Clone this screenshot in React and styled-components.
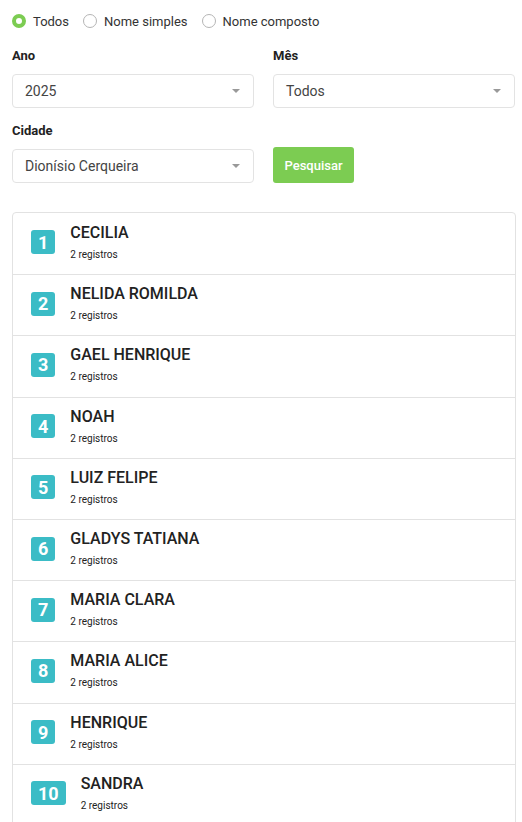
import React from "react";
import styled, { createGlobalStyle } from "styled-components";

const Global = createGlobalStyle`
  html, body { margin: 0; padding: 0; background: #fff; }
  body { font-family: Roboto, "Noto Sans", sans-serif; color: #222; }
  * { box-sizing: border-box; }
`;

const Page = styled.div`
  padding: 12px 6px 0 12px;
  width: 522px;
`;

const RadioRow = styled.div`
  display: flex;
  align-items: center;
  gap: 14px;
  height: 18px;
`;

const RadioItem = styled.label`
  display: flex;
  align-items: center;
  gap: 7px;
  font-size: 13px;
  color: #333;
`;

const RadioDot = styled.span`
  width: 14px;
  height: 14px;
  border-radius: 50%;
  border: ${(p) => (p.$on ? "4px solid #7ccc52" : "1px solid #b5b5b5")};
  background: #fff;
  display: inline-block;
`;

const Grid = styled.div`
  display: grid;
  grid-template-columns: 242px 242px;
  column-gap: 19px;
  margin-top: 18px;
`;

const Field = styled.div`
  display: flex;
  flex-direction: column;
  margin-bottom: 15px;
`;

const Label = styled.div`
  font-size: 13px;
  font-weight: 700;
  color: #222;
  height: 16px;
  line-height: 16px;
  margin-bottom: 10px;
`;

const Select = styled.div`
  height: 34px;
  border: 1px solid #e3e3e3;
  border-radius: 4px;
  display: flex;
  align-items: center;
  justify-content: space-between;
  padding: 0 13px 0 12px;
  font-size: 14px;
  color: #444;
`;

const Arrow = styled.span`
  width: 0;
  height: 0;
  border-left: 4px solid transparent;
  border-right: 4px solid transparent;
  border-top: 4px solid #999;
`;

const ButtonCell = styled.div`
  display: flex;
  align-items: flex-start;
  padding-top: 24px;
`;

const Button = styled.button`
  height: 36px;
  width: 81px;
  border: none;
  border-radius: 3px;
  background: #7ccc52;
  color: #fff;
  font-family: Roboto, sans-serif;
  font-size: 13px;
  font-weight: 500;
  padding: 0;
`;

const List = styled.div`
  margin-top: 14px;
  border: 1px solid #e2e2e2;
  border-radius: 4px 4px 0 0;
  width: 504px;
`;

const Row = styled.div`
  display: flex;
  align-items: center;
  height: 61.2px;
  padding-left: 18px;
  border-top: ${(p) => (p.$first ? "none" : "1px solid #e2e2e2")};
  gap: 15px;
`;

const Badge = styled.div`
  min-width: 24px;
  height: 24px;
  padding: 0 7px;
  margin-bottom: 3px;
  border-radius: 3px;
  background: #3bbcc6;
  color: #fff;
  font-weight: 700;
  font-size: 18px;
  display: flex;
  align-items: center;
  justify-content: center;
`;

const Info = styled.div`
  display: flex;
  flex-direction: column;
  padding-bottom: 4px;
`;

const Name = styled.div`
  font-size: 16px;
  font-weight: 500;
  color: #222;
  line-height: 20px;
`;

const Sub = styled.div`
  font-size: 10px;
  line-height: 12px;
  color: #222;
  margin-top: 6px;
`;

const names = [
  "CECILIA",
  "NELIDA ROMILDA",
  "GAEL HENRIQUE",
  "NOAH",
  "LUIZ FELIPE",
  "GLADYS TATIANA",
  "MARIA CLARA",
  "MARIA ALICE",
  "HENRIQUE",
  "SANDRA",
];

export default function App() {
  return (
    <Page>
      <Global />
      <RadioRow>
        <RadioItem>
          <RadioDot $on />
          Todos
        </RadioItem>
        <RadioItem>
          <RadioDot />
          Nome simples
        </RadioItem>
        <RadioItem>
          <RadioDot />
          Nome composto
        </RadioItem>
      </RadioRow>
      <Grid>
        <Field>
          <Label>Ano</Label>
          <Select>
            2025
            <Arrow />
          </Select>
        </Field>
        <Field>
          <Label>Mês</Label>
          <Select>
            Todos
            <Arrow />
          </Select>
        </Field>
        <Field>
          <Label>Cidade</Label>
          <Select>
            Dionísio Cerqueira
            <Arrow />
          </Select>
        </Field>
        <ButtonCell>
          <Button>Pesquisar</Button>
        </ButtonCell>
      </Grid>
      <List>
        {names.map((n, i) => (
          <Row key={n} $first={i === 0}>
            <Badge>{i + 1}</Badge>
            <Info>
              <Name>{n}</Name>
              <Sub>2 registros</Sub>
            </Info>
          </Row>
        ))}
      </List>
    </Page>
  );
}
